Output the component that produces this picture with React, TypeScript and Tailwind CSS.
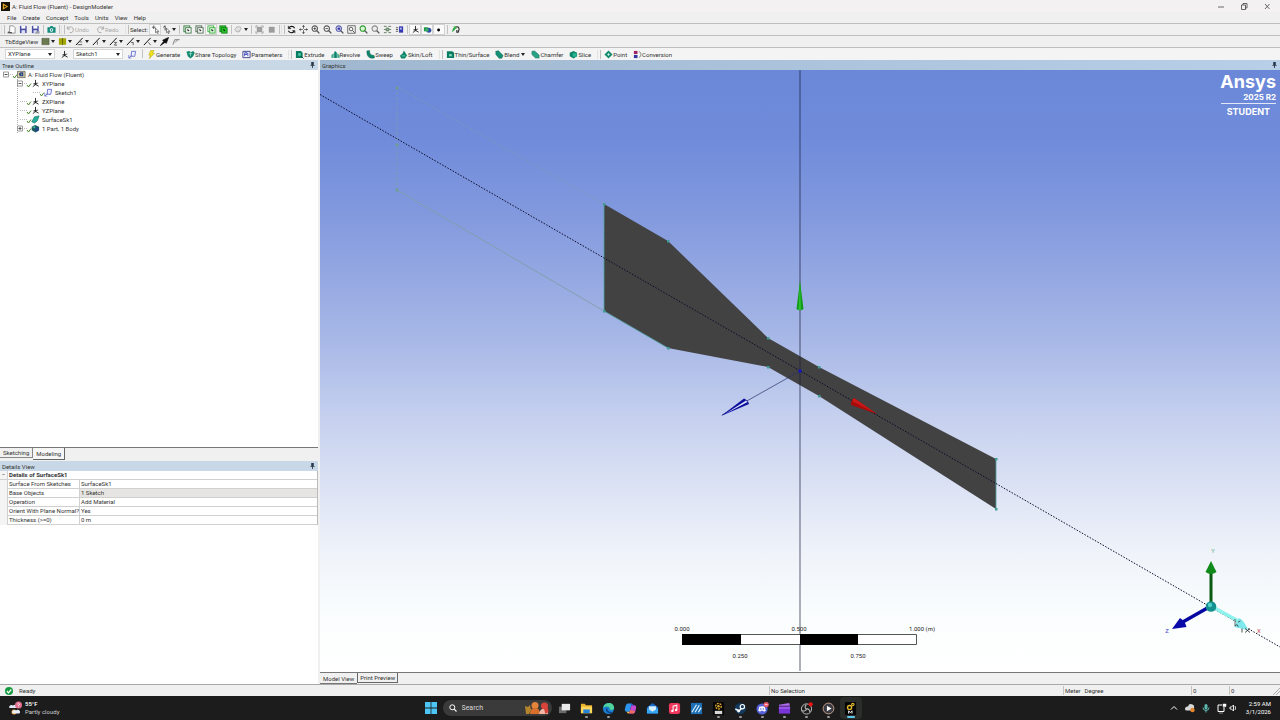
import React from "react";

type Glyph = React.ReactNode;

const axes = (
  <g fill="none" stroke="#222" strokeWidth="1">
    <path d="M5 1v5L2 8.500M5 6l3.500 2" />
    <path d="M2.500 5.500L8 4.500" stroke="#555" />
    <circle cx="5" cy="5.500" r=".8" fill="#111" />
  </g>
);

const edge = (mark: string) => (
  <g fill="none" stroke="#111">
    <path d="M1 9L8.500 1" strokeWidth="1.100" />
    <path d={mark} strokeWidth=".9" stroke="#444" />
  </g>
);

const boxGlyph = (front: string, edgeColor: string, back: string) => (
  <g>
    <rect x="1" y="1" width="6.500" height="6.500" fill={back} stroke={edgeColor} />
    <rect x="3" y="3" width="6" height="6" fill={front} stroke={edgeColor} />
    <path d="M4.500 4.500l3 1.200-1.300.6-.6 1.300z" fill="#111" />
  </g>
);

const lens = (inner: Glyph, ring = "#555", fill = "#fff") => (
  <g>
    <circle cx="4.200" cy="4" r="3" fill={fill} stroke={ring} strokeWidth="1.200" />
    <path d="M6.500 6.500L9.300 9.300" stroke="#555" strokeWidth="1.500" />
    {inner}
  </g>
);

const disk = (
  <g>
    <path d="M1 1h7.500v8H1z" fill="#4a4fa3" />
    <path d="M2.600 1h4.500v3H2.600z" fill="#fff" />
    <path d="M2.800 5.800h4v3.200h-4z" fill="#dfe2f4" />
  </g>
);

const glyphs: Record<string, Glyph> = {
  open: (
    <g>
      <path d="M3 1h4l2 2v6H3z" fill="#fff" stroke="#777" strokeWidth=".8" />
      <path d="M.5 8.500l2-2v1.200h3v1.600h-5z" fill="#555" />
    </g>
  ),
  save: disk,
  saveAs: (
    <g>
      {disk}
      <path d="M4 9.500h5.500v-2.500H6z" fill="#9a9aa8" />
    </g>
  ),
  camera: (
    <g>
      <path d="M.5 2.500h2.500L4 1.200h2.200l.8 1.300h2.500v6h-9z" fill="#138a7c" />
      <circle cx="5" cy="5.500" r="2" fill="#fff" />
      <circle cx="5" cy="5.500" r="1" fill="#138a7c" />
    </g>
  ),
  undo: <path d="M1.500 1.500v3h3M1.800 4.200A3.300 3.300 0 1 1 4 8.500" fill="none" stroke="#a5a5a5" />,
  redo: <path d="M8.500 1.500v3h-3M8.200 4.200A3.300 3.300 0 1 0 6 8.500" fill="none" stroke="#a5a5a5" />,
  pick: (
    <g>
      <path d="M1 2.500h4M3 .5v4" stroke="#333" strokeWidth=".8" />
      <path d="M5 3.500v5l1.200-1 1 2 .8-.4-.9-1.900h1.600z" fill="#fff" stroke="#222" strokeWidth=".6" />
    </g>
  ),
  pickMode: (
    <g>
      <path d="M3.500 1v5M1.500 2.500L3.500.8" stroke="#333" fill="none" />
      <path d="M5 3.500v5l1.200-1 1 2 .8-.4-.9-1.900h1.600z" fill="#fff" stroke="#222" strokeWidth=".6" />
    </g>
  ),
  boxPoint: boxGlyph("#fff", "#3c7a45", "#dcefdc"),
  boxEdge: boxGlyph("#fff", "#4d6a50", "#ececec"),
  boxFace: boxGlyph("#d6f5d4", "#3cae3f", "#fff"),
  boxBody: boxGlyph("#29cc2b", "#157f1b", "#29cc2b"),
  extend: (
    <g>
      <path d="M1 5l2-3h4l1 2-2 3H2z" fill="#e2e2e2" stroke="#a8a8a8" strokeWidth=".8" />
      <path d="M4 8.500l3-2.500" stroke="#b0b0b0" />
    </g>
  ),
  blockOut: (
    <g stroke="#8c8c8c" strokeWidth=".8">
      <path d="M2.500 2.500h5v5h-5z" fill="#a0a0a0" />
      <path d="M1 3V1h2M7 1h2v2M9 7v2H7M3 9H1V7" fill="none" />
    </g>
  ),
  block: <path d="M2 2h6.500v6.500H2z" fill="#9b9b9b" />,
  rotate: (
    <g fill="none" stroke="#111" strokeWidth="1.200">
      <path d="M8.500 3.500A3.700 3.700 0 0 0 2 3.500M1.500 6.500A3.700 3.700 0 0 0 8 6.800" />
      <path d="M1.500 1v3h3M8.700 9V6.300H6" strokeWidth=".9" />
    </g>
  ),
  pan: (
    <g fill="#222">
      <path d="M5 0l1.500 2h-3zM5 10l1.500-2h-3zM0 5l2-1.500v3zM10 5L8 3.500v3z" />
      <path d="M5 2.500v1.500M5 6v1.500M2.500 5H4M6 5h1.500" stroke="#222" strokeWidth=".9" />
    </g>
  ),
  zoomIn: lens(<path d="M4.200 2.500v3M2.700 4h3" stroke="#333" strokeWidth=".9" />),
  zoomOut: lens(<path d="M2.700 4h3" stroke="#333" strokeWidth=".9" />),
  zoomBlue: lens(<path d="M2.800 2.800h3v2.500h-3z" fill="#2b2fa8" />, "#5558a8"),
  zoomBox: (
    <g>
      <path d="M.8.800h8.400v8.400H.8z" fill="#f5f5f5" stroke="#555" strokeWidth=".9" />
      <circle cx="4.500" cy="4.500" r="2" fill="none" stroke="#444" strokeWidth=".9" />
      <path d="M6 6l2.500 2.500" stroke="#444" />
    </g>
  ),
  zoomFit: lens(null, "#2b9a2d", "#d9f7d6"),
  zoomPrev: lens(null, "#8a8a8a", "#eee"),
  iso: (
    <g stroke="#4b6a4d" strokeWidth=".9" fill="none">
      <path d="M1 1.500h3M6 1.500h3M1 8.500h3M6 8.500h3M1 5h2M7 5h2" />
      <path d="M3.500 3.500h3v3h-3z" fill="#9abf9c" />
    </g>
  ),
  look: (
    <g>
      <path d="M4.500 1.500H9v7H4.500z" fill="#3539b0" />
      <path d="M1 3h2.500M1 5h2.500M1 7h2.500" stroke="#444" strokeWidth=".9" />
      <path d="M5.500 3h2v2h-2z" fill="#b9c0ff" />
    </g>
  ),
  axes,
  bodies: (
    <g>
      <path d="M1 2.500h4.500v4.500H1z" fill="#1e9a48" />
      <circle cx="6.500" cy="5.800" r="2.800" fill="#2d4fa3" />
      <path d="M3 4h3v3H3z" fill="#3fb46a" />
    </g>
  ),
  dot: <circle cx="4" cy="5.500" r="1.600" fill="#000" />,
  display: (
    <g>
      <path d="M1 8l1.500-5L4.500 5z" fill="#1f9d36" />
      <path d="M5 2.500c2-1.500 4 0 4 2.500L8 8H6.500V5.500" fill="none" stroke="#222" strokeWidth="1.200" />
      <path d="M3 1.500h3v3H3z" fill="#3fb14d" />
    </g>
  ),
  faceColor: <path d="M1 1.500h8v7H1z" fill="#6c7a4f" stroke="#4d5840" strokeWidth=".6" />,
  edgeColor: (
    <g>
      <path d="M1 1.500h3.500v7H1zM5.500 1.500H9v7H5.500z" fill="#a3a500" />
      <path d="M5 1v8" stroke="#5e6000" />
    </g>
  ),
  edge0: edge("M3 8.500h5M5 5.500h3"),
  edge1: edge("M6 5v3.500"),
  edge2: edge("M5.500 6h3l-2.500 3h3"),
  edge3: edge("M5.500 6h2.500v3"),
  edge4: edge("M6 6l2.500 3"),
  edgeThick: <path d="M.5 9.500L4 5 3 3.500 9.500.5 7 7 5.500 6z" fill="#0c0c0c" stroke="#0c0c0c" strokeWidth=".8" />,
  edgeEnd: <path d="M1 8.500L3 3h5.500M3.500 6l3-3" fill="none" stroke="#777" />,
  sketch: (
    <g fill="none" strokeWidth=".9">
      <path d="M4 1.500h4.500L7.500 7H3.500z" stroke="#5a64c8" fill="#eef0ff" />
      <path d="M.8 9l3-3" stroke="#35409c" />
      <path d="M.8 5.500v3.500h3" stroke="#7a84d8" />
    </g>
  ),
  generate: <path d="M4 .5h4L6 3.500h2.500L2.500 9.700l1.300-4H2z" fill="#f2e21b" stroke="#a89a10" strokeWidth=".5" />,
  topology: (
    <g>
      <path d="M.5 2l3-1 2 1.500L8 1l1.700 2L8 7 5 9.500 2 7z" fill="#11886f" />
      <path d="M3 4h4M5 3v4" stroke="#a9e5d6" strokeWidth=".8" />
    </g>
  ),
  params: (
    <g>
      <path d="M1 1.500h8v7H1z" fill="#fff" stroke="#333a8c" />
      <path d="M3 7V3h2.500v2H3M6.500 3v4" fill="none" stroke="#3b44b8" />
    </g>
  ),
  extrude: (
    <g>
      <path d="M1 1h5.500l2 2v6H1z" fill="#0b7d63" />
      <path d="M3.500 3.500h3v3h-3z" fill="#48c7a2" />
      <path d="M6.500 6.500l3 3" stroke="#0a4f40" />
    </g>
  ),
  revolve: (
    <g fill="#0d8469">
      <path d="M4.500 1l2 2v6h-3V3z" />
      <path d="M.5 5.500L3 3.500v5L.5 9zM9.500 5.500L7 3.500v5l2.500.5z" fill="#3aa98c" />
    </g>
  ),
  sweep: <path d="M1 1l3-.5C3.800 4 5 6 9 6l.5 2.500C5 10.500.5 8 1 1z" fill="#0d8469" stroke="#0a5f4c" strokeWidth=".5" />,
  skin: (
    <g>
      <path d="M5.500.5L7 3 9 6 6.500 9.500h-4L1 6.500 4 4z" fill="#0d8469" />
      <path d="M3 6.500h4" stroke="#5fcfb2" />
    </g>
  ),
  thin: (
    <g>
      <path d="M1 1.500h6l2 1.500v6H1z" fill="#0b7d63" />
      <path d="M3.500 4.500h3v2.500h-3z" fill="#7fd8be" />
    </g>
  ),
  blend: <path d="M.8 1.500l3-.7L9 6 7.500 9.200H4.500L1 5z" fill="#159075" stroke="#0a5f4c" strokeWidth=".5" />,
  chamfer: <path d="M1 1.500l3-.5 5 4.500V9H5L1 5z" fill="#2aa287" stroke="#0b6b55" strokeWidth=".5" />,
  slice: (
    <g>
      <path d="M.8 3L5 1l4 2v4L5 9.500.8 7z" fill="#0d8469" />
      <path d="M4 3.500h4.500v4H4z" fill="#27b38e" />
    </g>
  ),
  point: (
    <g>
      <path d="M5 .5L9.500 5 5 9.500.5 5z" fill="#138a70" />
      <path d="M5 3.500v3M3.500 5h3" stroke="#e8fff8" strokeWidth=".8" />
    </g>
  ),
  conversion: (
    <g>
      <path d="M1 1h4v3.500H1z" fill="#a02463" />
      <path d="M1 5.500h4V9H1z" fill="#3436a0" />
      <path d="M6.500 1.500c3 1.500 3 5.500 0 7" fill="none" stroke="#777" />
    </g>
  ),
  project: (
    <g>
      <path d="M.5 1.500h8.500v7H.5z" fill="#d9d2a0" stroke="#444" strokeWidth=".7" />
      <path d="M2 4l2-1.500h3V7H3z" fill="#3a3d8e" />
      <path d="M4 3.500l2 1-1 2z" fill="#4ec06a" />
    </g>
  ),
  surface: <path d="M.8 7.500L4 2l5-1-2 5.500-3 2.500z" fill="#27ad98" stroke="#0b7466" strokeWidth=".7" />,
  part: (
    <g>
      <path d="M.8 3L4.500 1 9 3v4L5 9.500.8 7z" fill="#1c5d62" />
      <path d="M1.500 3.500L4.500 2v3z" fill="#45b59c" />
      <circle cx="6.500" cy="6" r="2.200" fill="#20498c" />
    </g>
  ),
};

function Ico({ name }: { name: string }) {
  return (
    <svg viewBox="0 0 10 10" className="size-[9px] shrink-0" aria-hidden="true">
      {glyphs[name]}
    </svg>
  );
}

function Caret() {
  return (
    <svg viewBox="0 0 4 3" className="h-[3px] w-1 shrink-0" aria-hidden="true">
      <path d="M0 0h4L2 3z" fill="#222" />
    </svg>
  );
}

function Sep() {
  return <span className="flex h-[9px] w-1 shrink-0 justify-center before:w-px before:bg-[#c2c2c2]" />;
}

function Grip() {
  return <span className="h-[9px] w-1 shrink-0 border-x border-[#bdbdbd] border-l-[#e2e2e2]" />;
}

function Tool({ name, label, menu, pressed }: { name: string; label: string; menu?: boolean; pressed?: boolean }) {
  const size = menu ? "w-4 justify-start pl-px" : "w-3 justify-center";
  const face = pressed ? "bg-[#fafafa] ring-1 ring-inset ring-[#d4d4d4]" : "";
  return (
    <button type="button" aria-label={label} className={`flex h-[11px] shrink-0 items-center gap-px ${size} ${face}`}>
      <Ico name={name} />
      {menu && <Caret />}
    </button>
  );
}

function Feature({ name, label, menu, dim }: { name: string; label: string; menu?: boolean; dim?: boolean }) {
  return (
    <button type="button" className={`flex shrink-0 items-center ${dim ? "text-[#a8a8a8]" : ""}`}>
      <Ico name={name} />
      <span className={menu ? "pr-[2px]" : ""}>{label}</span>
      {menu && <Caret />}
    </button>
  );
}

function FeatureGroup({ children }: { children: React.ReactNode }) {
  return <div className="flex items-center gap-[6px] pl-[3px] pr-[6px]">{children}</div>;
}

function Combo({ label, value }: { label: string; value: string }) {
  return (
    <span className="flex h-[10px] w-[50px] shrink-0 items-center border border-[#d5d5d5] bg-white pr-[2px]">
      <select aria-label={label} className="min-w-0 flex-1 appearance-none bg-transparent pl-[2px] leading-[8px] outline-none">
        <option>{value}</option>
      </select>
      <Caret />
    </span>
  );
}

function Pin() {
  return (
    <svg viewBox="0 0 5 7" className="h-[6px] w-[5px]" aria-hidden="true">
      <path d="M1 0h3v3.500h1v1H3V7H2V4.500H0v-1h1z" fill="#29394a" />
    </svg>
  );
}

const bar = "flex shrink-0 items-center border-t border-[#bfbfbf]";

const menus = ["File", "Create", "Concept", "Tools", "Units", "View", "Help"];
const edgeTools = ["edge0", "edge1", "edge2", "edge3", "edge4"];

const views: [string, string][] = [
  ["rotate", "Rotate"],
  ["pan", "Pan"],
  ["zoomIn", "Zoom in"],
  ["zoomOut", "Zoom out"],
  ["zoomBlue", "Box zoom"],
  ["zoomBox", "Zoom to box"],
  ["zoomFit", "Zoom to fit"],
  ["zoomPrev", "Previous view"],
  ["iso", "Isometric view"],
  ["look", "Look at face"],
];

function TreeRow({ icon, label, open, pad }: { icon: string; label: string; open?: boolean; pad?: string }) {
  return (
    <div className={`flex h-[9px] items-center ${pad ?? ""}`}>
      <svg viewBox="0 0 17 9" className="h-[9px] w-[17px] shrink-0" aria-hidden="true">
        <path d="M3 4.500h8" stroke="#bbb" strokeDasharray="1 1" />
        {open !== undefined && (
          <g fill="#fff" stroke="#999">
            <path d="M.5 2h5v5h-5z" />
            <path d={open ? "M1.500 4.500h3" : "M1.500 4.500h3M3 3v3"} stroke="#555" />
          </g>
        )}
        <path d="M10 6l1.500 2L14 4.500" fill="none" stroke="#4b8a2c" />
      </svg>
      <span className="-ml-[3px] mr-[2px] flex">
        <Ico name={icon} />
      </span>
      {label}
    </div>
  );
}

const details: [string, string][] = [
  ["Surface From Sketches", "SurfaceSk1"],
  ["Base Objects", "1 Sketch"],
  ["Operation", "Add Material"],
  ["Orient With Plane Normal?", "Yes"],
  ["Thickness (>=0)", "0 m"],
];

const outline = "284,134 348,171 448,268 499,297 676,389 676,439 499,326 448,297 348,278 284,241";
const corners = outline.split(" ").map((p) => p.split(",").map(Number));

function Scene() {
  return (
    <svg viewBox="0 0 960 602" className="block h-full w-full" role="img" aria-label="Nozzle surface model">
      <g stroke="#7f9fa8" fill="none">
        <path d="M77 17L284 134" strokeDasharray="2 2" opacity=".7" />
        <path d="M77 17v103" strokeDasharray="3 2" opacity=".7" />
        <path d="M77 120L284 241" opacity=".9" />
      </g>
      <g fill="#6d9f8f">
        <circle cx="77" cy="18" r="1.500" />
        <circle cx="77" cy="75" r="1.500" />
        <circle cx="77" cy="120" r="1.500" />
      </g>
      <polygon points={outline} fill="#424242" />
      <path d="M284 134v107l64 37M676 389v50" fill="none" stroke="#4fa3a0" strokeWidth=".8" />
      {corners.map(([x, y]) => (
        <rect key={`${x}-${y}`} x={x - 1} y={y - 1} width="2.500" height="2.500" fill="#3f9d96" />
      ))}
      <path d="M0 24.500L960 577" stroke="#0a0a28" strokeWidth="1" strokeDasharray="1.500 1.500" />
      <path d="M480 0v601" stroke="#1c2140" strokeOpacity=".55" strokeWidth="1.300" />
      <path d="M480 301L402 345" stroke="#2a3068" strokeWidth=".7" />
      <path d="M480 211l-3.500 28q3.500 2.500 7 0z" fill="#0f9a17" />
      <path d="M480 211l-1.500 29h2.500z" fill="#2fbf30" />
      <path d="M557 344l-26-9q-.5-4 3-7z" fill="#a80b0b" />
      <path d="M557 344l-25-13 2-3z" fill="#cc1818" />
      <path d="M401 346l23-17.500q4 1.500 5 5.500z" fill="#0b0f9c" />
      <path d="M405 344l21-13.500 1.500 1.500z" fill="#d9defa" />
      <rect x="478.500" y="299.500" width="3" height="3" fill="#1414c8" />

      <g>
        <path d="M891 536v-35" stroke="#0a5a12" strokeWidth="3" />
        <path d="M891 491l-5.500 11q5.500 4 11 0z" fill="#118a1c" />
        <path d="M891 536l-30 17" stroke="#0508a0" strokeWidth="3.500" />
        <path d="M852 559l8-11q5 3 6.500 9z" fill="#0a0aa8" />
        <path d="M891 536l29 16" stroke="#8df3ec" strokeWidth="3.500" />
        <path d="M928 560l-14-3 5-9q5 2 9 12z" fill="#7fe9ee" />
        <circle cx="891" cy="536.500" r="5.300" fill="#168f8f" />
        <circle cx="890" cy="535" r="2.200" fill="#4fd0c8" />
        <path d="M915 549v7l2-1.500 1.300 2.500M918 552l2.500-1" fill="none" stroke="#444" strokeWidth=".8" />
        <path d="M922 558.500v4M925 558.500l5 4M930 558.500l-5 4" stroke="#222" strokeWidth=".8" />
      </g>
      <g className="text-[6px]" textAnchor="middle">
        <text x="893" y="483" fill="#6fae8f">Y</text>
        <text x="847" y="563" fill="#4a4fd0">Z</text>
        <text x="939" y="563" fill="#d04a5a">X</text>
      </g>

      <path d="M362.500 564.500h234v10h-234z" fill="#fff" stroke="#555" />
      <path d="M362 564h59v11h-59zM480 564h58v11h-58z" fill="#000" />
      <g className="text-[6px]" textAnchor="middle" fill="#222">
        <text x="362" y="561">0.000</text>
        <text x="479" y="561">0.500</text>
        <text x="602" y="561">1.000 (m)</text>
        <text x="420" y="588">0.250</text>
        <text x="538" y="588">0.750</text>
      </g>
    </svg>
  );
}

const apps: { label: string; running?: boolean; active?: boolean; art: Glyph }[] = [
  {
    label: "Task view",
    art: (
      <g>
        <path d="M1 5h8v7H1z" fill="#6a6a6a" />
        <path d="M4 2h9v7H4z" fill="#e9e9e9" />
      </g>
    ),
  },
  {
    label: "File Explorer",
    running: true,
    art: (
      <g>
        <path d="M1 2h4l1.500 1.500H13V12H1z" fill="#e9b32b" />
        <path d="M1 5h12v7H1z" fill="#ffd65c" />
        <path d="M3.500 8h7v4h-7z" fill="#2583d8" />
      </g>
    ),
  },
  {
    label: "Edge",
    running: true,
    art: (
      <g>
        <circle cx="7" cy="7" r="6" fill="#1b7fd0" />
        <path d="M1.200 6C2 2.500 5 1 7.500 1c4 0 5.800 3 5.500 5.500-.4 2.500-3.500 2.600-4.800 1.700C9 6 7 4.500 5 4.800 3 5 1.800 5.500 1.200 6z" fill="#4fd39a" />
        <path d="M5 7c-.5 3 2 5 5.500 4.500" fill="none" stroke="#0b3f86" strokeWidth="1.500" />
      </g>
    ),
  },
  {
    label: "Copilot",
    art: (
      <g>
        <path d="M4 1.500h4.500L6 10.500H3C.8 10.500.6 8.500 1.200 6.500 1.800 4 2.300 1.500 4 1.500z" fill="#2b95ee" />
        <path d="M10 12.500H5.500L8 3.500h3c2.200 0 2.400 2 1.800 4-.6 2.500-1.100 5-2.800 5z" fill="#c24bd0" />
        <path d="M3 10.500h3l-.8 2q-1.800 0-2.200-2z" fill="#f7c04a" />
        <path d="M8 1.500q2 0 2.500 2H8z" fill="#2a55d8" />
        <path d="M6.600 8.500L5.500 12.500H10q1.200-.3 1.800-2.500z" fill="#ee6a5a" />
      </g>
    ),
  },
  {
    label: "Mail",
    art: (
      <g>
        <path d="M1 6l6-5 6 5v6.500H1z" fill="#1769c9" />
        <path d="M3 4.500h8V9L7 11 3 9z" fill="#d6efff" />
        <path d="M1 6.500l6 4 6-4v6H1z" fill="#38a5f2" />
      </g>
    ),
  },
  {
    label: "Music",
    art: (
      <g>
        <rect x="1" y="1" width="12" height="12" rx="2.500" fill="#f0385c" />
        <path d="M5.500 9.500V4.500l4-1v5" fill="none" stroke="#fff" strokeWidth="1.100" />
        <circle cx="4.700" cy="9.600" r="1.300" fill="#fff" />
        <circle cx="8.700" cy="8.700" r="1.300" fill="#fff" />
      </g>
    ),
  },
  {
    label: "MATLAB",
    art: (
      <g>
        <path d="M1 1h12v12H1z" fill="#1c6fb4" />
        <path d="M2 11L7 3M5.500 11L10 3.500M9 11l3-5" fill="none" stroke="#d8efff" strokeWidth="1.300" />
      </g>
    ),
  },
  {
    label: "Workbench",
    running: true,
    art: (
      <g>
        <path d="M1 0h12v14H1z" fill="#060606" />
        <circle cx="7" cy="4.500" r="3" fill="none" stroke="#dfa92a" strokeWidth="1.500" strokeDasharray="2 1" />
        <circle cx="7" cy="4.500" r="1.300" fill="#dfa92a" />
        <path d="M3 9.500h8V13H3z" fill="#d7d7d7" />
      </g>
    ),
  },
  {
    label: "Steam",
    running: true,
    art: (
      <g>
        <circle cx="7" cy="7" r="6" fill="#12395c" />
        <circle cx="9" cy="5" r="2.300" fill="none" stroke="#fff" strokeWidth="1.300" />
        <path d="M1.500 7.500l4 2L8 7" fill="none" stroke="#fff" strokeWidth="1.600" />
        <circle cx="5" cy="9.800" r="1.600" fill="#fff" />
      </g>
    ),
  },
  {
    label: "Discord",
    running: true,
    art: (
      <g>
        <circle cx="6.500" cy="7.500" r="6" fill="#5561d8" />
        <path d="M3.500 5.200q3-1.200 6 0l1 4.300-2 1-.6-1H5.100l-.6 1-2-1z" fill="#fff" />
        <circle cx="5.200" cy="7.500" r=".8" fill="#5561d8" />
        <circle cx="7.800" cy="7.500" r=".8" fill="#5561d8" />
        <circle cx="11" cy="2.800" r="2.800" fill="#ea5a6a" />
        <path d="M9.500 2.800h3" stroke="#ffd8dc" />
      </g>
    ),
  },
  {
    label: "Clipchamp",
    running: true,
    art: (
      <g>
        <path d="M1 3l11-2 .8 3H1z" fill="#b26bf0" />
        <path d="M1 5h12v7.500H1z" fill="#7a35d8" />
        <path d="M1 5h12v2.500H1z" fill="#9a55ea" />
      </g>
    ),
  },
  {
    label: "OBS Studio",
    running: true,
    art: (
      <g>
        <circle cx="7" cy="7.500" r="5.500" fill="#1e1e1e" stroke="#c4c4c4" />
        <path d="M7 7.500c-2-1-2-3.500 0-4.500M7 7.500c2-.5 4 1 3.500 3.500M7 7.500c-.5 2-3 3-4.500 1.500" fill="none" stroke="#c4c4c4" strokeWidth="1.100" />
        <circle cx="11.500" cy="2.500" r="2.300" fill="#e81414" />
      </g>
    ),
  },
  {
    label: "Media Player",
    running: true,
    art: (
      <g>
        <circle cx="7" cy="7" r="5.800" fill="#3b3b46" stroke="#c9a48c" />
        <path d="M5.300 4l5 3-5 3z" fill="#fff" />
      </g>
    ),
  },
  {
    label: "DesignModeler",
    running: true,
    active: true,
    art: (
      <g>
        <path d="M1 0h12v14H1z" fill="#060606" />
        <circle cx="6" cy="6" r="2.200" fill="none" stroke="#e2b92e" strokeWidth="1.500" />
        <circle cx="9.500" cy="2.800" r="1.300" fill="none" stroke="#e2b92e" strokeWidth="1.200" />
        <path d="M5 12.500V9.500l1.800 2 1.800-2v3" fill="none" stroke="#fff" />
      </g>
    ),
  },
];

function Taskbar() {
  return (
    <footer className="grid h-6 shrink-0 grid-cols-[1fr_auto_1fr] items-center bg-[#1c1c1c] text-[7px] text-white">
      <button type="button" className="flex items-center gap-[3px] pl-2 text-left text-[6px] leading-[8px]">
        <svg viewBox="0 0 14 14" className="size-[14px]" aria-hidden="true">
          <path d="M1 6.500a2.500 2.500 0 0 1 4-2 3 3 0 0 1 5 2.500H2z" fill="#dfe6f5" />
          <circle cx="6" cy="11" r="2.500" fill="#f0a03c" />
          <path d="M4 11.500a2.500 2.500 0 0 1 4-2 2.300 2.300 0 0 1 4 2q0 1-1 1H5z" fill="#e8edf8" />
          <circle cx="10.500" cy="4" r="3.500" fill="#e0708f" />
          <path d="M9.500 3q1-1.500 2 0 0 1-1 1.300v.7M10.500 5.700v.6" fill="none" stroke="#fff" strokeWidth=".8" />
        </svg>
        <span>
          <span className="block font-semibold">55°F</span>
          <span className="block text-[#cfcfcf]">Partly cloudy</span>
        </span>
      </button>

      <div className="flex items-center pl-[6px]">
        <button type="button" aria-label="Start" className="mr-[6px] flex w-3">
          <svg viewBox="0 0 12 12" className="size-3" aria-hidden="true">
            <path d="M0 0h5.600v5.600H0zM6.400 0H12v5.600H6.400zM0 6.400h5.600V12H0zM6.400 6.400H12V12H6.400z" fill="#4cc4f4" />
          </svg>
        </button>
        <label className="mr-[2px] flex h-4 w-[109px] items-center rounded-full bg-[#3a3a3a] pl-[6px] pr-[2px]">
          <svg viewBox="0 0 8 8" className="size-2 shrink-0" aria-hidden="true">
            <circle cx="3.300" cy="3.300" r="2.500" fill="none" stroke="#fff" strokeWidth="1" />
            <path d="M5.200 5.200L7.500 7.500" stroke="#fff" strokeWidth="1.100" />
          </svg>
          <input aria-label="Search" placeholder="Search" className="min-w-0 flex-1 bg-transparent pl-[5px] outline-none placeholder:text-[#d8d8d8]" />
          <svg viewBox="0 0 26 14" className="h-[14px] w-[26px] shrink-0" aria-hidden="true">
            <path d="M1 5l3 1 2-2 1 5-2 4H2z" fill="#b5852c" />
            <circle cx="11" cy="4.500" r="3.500" fill="#e2853a" />
            <path d="M6 13q0-6 5-6t5 6z" fill="#d8702c" />
            <circle cx="20.500" cy="5" r="3.500" fill="#d8433a" />
            <path d="M15 13q1-5 4-5 5 0 5 5z" fill="#f1b8a8" />
            <path d="M20 8l4-1 .5 4-3 2z" fill="#d8433a" />
          </svg>
        </label>
        <div className="flex">
          {apps.map((app) => (
            <button
              key={app.label}
              type="button"
              aria-label={app.label}
              className={`flex h-[22px] w-[22px] flex-col items-center justify-end gap-px rounded-sm pb-px ${app.active ? "bg-[#2a2d2a]" : ""}`}
            >
              <svg viewBox="0 0 14 14" className="size-[13px]" aria-hidden="true">
                {app.art}
              </svg>
              <span className={`h-[2px] rounded-full ${app.active ? "w-2 bg-[#5cc8ee]" : app.running ? "w-[3px] bg-[#9a9a9a]" : "w-[3px]"}`} />
            </button>
          ))}
        </div>
      </div>

      <div className="flex items-center justify-end gap-[9px] pr-[9px]">
        <svg viewBox="0 0 68 12" className="h-3 w-[68px]" role="img" aria-label="System tray">
          <path d="M2 7.500L5 4.500l3 3" fill="none" stroke="#fff" />
          <path d="M16 7a2.500 2.500 0 0 1 3-2.500A3 3 0 0 1 25 6q0 2.500-2 2.500h-5.500Q16 8.500 16 7z" fill="#d8d8d8" />
          <circle cx="23.500" cy="8" r="2.200" fill="#e8862c" />
          <rect x="35.500" y="2" width="3" height="5.500" rx="1.500" fill="#5fb8b0" />
          <path d="M34 5.500a3 3 0 0 0 6 0M37 8.500v2" fill="none" stroke="#5fb8b0" />
          <path d="M55 5V9.500h-6V3h4" fill="none" stroke="#fff" />
          <path d="M54 2h3v2.500h-3zM50 11h4" fill="#fff" stroke="#fff" strokeWidth=".5" />
          <path d="M61 5h1.500l2-2v6l-2-2H61z" fill="none" stroke="#fff" strokeWidth=".9" />
          <path d="M66 4q1.200 2 0 4" fill="none" stroke="#fff" strokeWidth=".8" />
        </svg>
        <div className="text-right text-[6px] leading-[8px]">
          <div>2:59 AM</div>
          <div>3/1/2026</div>
        </div>
      </div>
    </footer>
  );
}

export default function App() {
  return (
    <div className="flex h-screen flex-col overflow-hidden bg-[#f0f0f0] font-['Roboto','Noto_Sans',sans-serif] text-[6px] leading-[9px] whitespace-nowrap text-[#333]">
      <header className="flex h-3 shrink-0 items-center gap-[2px] bg-[#f3f1f1] pl-px">
        <svg viewBox="0 0 10 10" className="size-[9px]" aria-hidden="true">
          <path d="M0 0h10v10H0z" fill="#161208" />
          <path d="M2 1.500L8 5 2 8.500z" fill="#e5a823" />
          <path d="M3.500 4L6 5 3.500 6.500z" fill="#161208" />
        </svg>
        <h1 className="flex-1">A: Fluid Flow (Fluent) - DesignModeler</h1>
        <div className="flex gap-[14px] pr-2">
          {[
            ["Minimize", "M1 5h6"],
            ["Restore", "M1.500 3h4v4.500h-4zM3 3V1.500h4V6H5.500"],
            ["Close", "M2 2l4.500 5M6.500 2L2 7"],
          ].map(([label, d]) => (
            <button key={label} type="button" aria-label={label} className="w-[9px]">
              <svg viewBox="0 0 9 9" className="size-[9px]" aria-hidden="true">
                <path d={d} fill="none" stroke="#444" strokeWidth=".8" />
              </svg>
            </button>
          ))}
        </div>
      </header>

      <nav className="flex h-[11px] shrink-0 items-center gap-[6px] pl-[7px]">
        {menus.map((m) => (
          <button key={m} type="button">
            {m}
          </button>
        ))}
      </nav>

      <div className={`${bar} h-3 pl-px`}>
        <Grip />
        <Tool name="open" label="New" />
        <Tool name="save" label="Save" />
        <Tool name="saveAs" label="Save as" />
        <Sep />
        <Tool name="camera" label="Image capture" />
        <Sep />
        <Grip />
        <div className="flex w-[60px] gap-[7px] pl-px">
          <Feature name="undo" label="Undo" dim />
          <Feature name="redo" label="Redo" dim />
        </div>
        <Grip />
        <span className="w-5 pl-px">Select:</span>
        <Tool name="pick" label="New selection" pressed />
        <Tool name="pickMode" label="Selection mode" menu />
        <Sep />
        <Tool name="boxPoint" label="Select points" />
        <Tool name="boxEdge" label="Select edges" />
        <Tool name="boxFace" label="Select faces" pressed />
        <Tool name="boxBody" label="Select bodies" />
        <Sep />
        <Tool name="extend" label="Extend selection" menu />
        <Sep />
        <Tool name="blockOut" label="Expand selection" />
        <Tool name="block" label="Shrink selection" />
        <Sep />
        <Grip />
        {views.map(([name, label]) => (
          <Tool key={name} name={name} label={label} />
        ))}
        <Sep />
        <Tool name="axes" label="Display plane" pressed />
        <Tool name="bodies" label="Display model" pressed />
        <Tool name="dot" label="Display points" pressed />
        <Sep />
        <Tool name="display" label="Show vertices" />
      </div>

      <div className={`${bar} h-3 pl-[5px]`}>
        <span className="w-[35px]">TbEdgeView</span>
        <div className="flex gap-px">
          <Tool name="faceColor" label="Face colouring" menu />
          <Tool name="edgeColor" label="Edge colouring" menu />
          {edgeTools.map((name) => (
            <Tool key={name} name={name} label={`Edge style ${name.slice(4)}`} menu />
          ))}
        </div>
        <Tool name="edgeThick" label="Thick edges" />
        <Tool name="edgeEnd" label="Edge ends" />
      </div>

      <div className={`${bar} h-[13px] bg-[#f4f4f4] pl-[5px]`}>
        <Combo label="Active plane" value="XYPlane" />
        <div className="flex px-[3px]">
          <Tool name="axes" label="New plane" />
        </div>
        <Combo label="Active sketch" value="Sketch1" />
        <div className="flex gap-[2px] pl-[3px]">
          <Tool name="sketch" label="New sketch" />
          <Sep />
        </div>
        <FeatureGroup>
          <Feature name="generate" label="Generate" />
          <Feature name="topology" label="Share Topology" />
          <Feature name="params" label="Parameters" />
        </FeatureGroup>
        <Grip />
        <FeatureGroup>
          <Feature name="extrude" label="Extrude" />
          <Feature name="revolve" label="Revolve" />
          <Feature name="sweep" label="Sweep" />
          <Feature name="skin" label="Skin/Loft" />
        </FeatureGroup>
        <Grip />
        <FeatureGroup>
          <Feature name="thin" label="Thin/Surface" />
          <Feature name="blend" label="Blend" menu />
          <Feature name="chamfer" label="Chamfer" />
          <Feature name="slice" label="Slice" />
        </FeatureGroup>
        <Grip />
        <FeatureGroup>
          <Feature name="point" label="Point" />
          <Feature name="conversion" label="Conversion" />
        </FeatureGroup>
      </div>

      <main className="flex min-h-0 flex-1">
        <aside className="mr-[2px] flex w-[318px] shrink-0 flex-col bg-white">
          <h2 className="flex h-[10px] shrink-0 items-center justify-between bg-[#c9d8e6] pl-[2px] pr-[3px]">
            Tree Outline <Pin />
          </h2>
          <div className="flex-1 pl-[3px]">
            <TreeRow icon="project" label="A: Fluid Flow (Fluent)" open />
            <div className="ml-[14px] border-l border-dotted border-[#aaa]">
              <div className="-ml-px">
                <TreeRow icon="axes" label="XYPlane" open />
                <TreeRow icon="sketch" label="Sketch1" pad="pl-[13px]" />
                <TreeRow icon="axes" label="ZXPlane" />
                <TreeRow icon="axes" label="YZPlane" />
                <TreeRow icon="surface" label="SurfaceSk1" />
                <TreeRow icon="part" label="1 Part, 1 Body" open={false} />
              </div>
            </div>
          </div>
          <div className="flex h-[14px] shrink-0 border-t border-[#777] bg-[#f0f0f0]" role="tablist">
            <button type="button" role="tab" aria-selected="false" className="h-[10px] border-b border-r border-[#888] px-[3px]">
              Sketching
            </button>
            <button type="button" role="tab" aria-selected="true" className="h-[12px] border-b border-r border-[#666] bg-[#f6f6f6] px-[3px]">
              Modeling
            </button>
          </div>
          <h2 className="flex h-[10px] shrink-0 items-center justify-between bg-[#c9d8e6] pl-[2px] pr-[3px]">
            Details View <Pin />
          </h2>
          <div className="h-[213px] shrink-0">
            <table className="w-full table-fixed border-separate border-spacing-0 border-r border-[#bbb] leading-[8px]">
              <colgroup>
                <col className="w-[7px]" />
                <col className="w-[72px]" />
                <col />
              </colgroup>
              <thead>
                <tr>
                  <th className="h-[9px] border-b border-[#d0d0d0] bg-[#f4f4f4] p-0 text-center font-normal">−</th>
                  <th colSpan={2} className="h-[9px] border-b border-l border-[#d0d0d0] p-0 pl-px text-left font-bold">
                    Details of SurfaceSk1
                  </th>
                </tr>
              </thead>
              <tbody>
                {details.map(([key, value], i) => (
                  <tr key={key}>
                    <td className="h-[9px] bg-[#f4f4f4] p-0" />
                    <th scope="row" className="h-[9px] border-b border-l border-[#d0d0d0] p-0 pl-px text-left font-normal">
                      {key}
                    </th>
                    <td className={`h-[9px] border-b border-l border-[#d0d0d0] p-0 pl-px ${i === 1 ? "bg-[#e6e5e1]" : ""}`}>{value}</td>
                  </tr>
                ))}
              </tbody>
            </table>
          </div>
        </aside>

        <section className="flex min-w-0 flex-1 flex-col">
          <h2 className="flex h-[10px] shrink-0 items-center justify-between bg-linear-to-r from-[#9fb8d0] to-[#b7d0e8] pl-[2px] pr-[3px]">
            Graphics <Pin />
          </h2>
          <div className="relative min-h-0 flex-1 bg-[linear-gradient(to_bottom,#6b87d8_0%,#6f8bda_11%,#8299de_24%,#a6b6e6_44%,#c6d1ef_58%,#dfe5f5_71%,#f0f4fa_81%,#fbfefe_91%,#ffffff_100%)]">
            <Scene />
            <div className="absolute right-1 top-[2px] flex flex-col items-end font-['Inter',sans-serif] font-bold text-white">
              <span className="text-[18px] leading-5">Ansys</span>
              <span className="text-[8px] leading-[10px]">2025 R2</span>
              <span className="mt-px border-t border-white/80 px-[6px] pt-[3px] text-[9px] leading-[10px]">STUDENT</span>
            </div>
          </div>
          <div className="flex h-3 shrink-0 border-t border-[#777] bg-[#f0f0f0]" role="tablist">
            <button type="button" role="tab" aria-selected="true" className="h-[11px] border-b border-[#777] px-[3px]">
              Model View
            </button>
            <button type="button" role="tab" aria-selected="false" className="h-[10px] border border-t-0 border-[#666] px-[2px]">
              Print Preview
            </button>
          </div>
        </section>
      </main>

      <div className="flex h-3 shrink-0 items-center border-t border-[#a8a8a8] bg-[#f0f0f0]">
        <div className="flex flex-1 items-center gap-[6px] pl-[5px]">
          <svg viewBox="0 0 8 8" className="size-2" aria-hidden="true">
            <circle cx="4" cy="4" r="4" fill="#179a3f" />
            <path d="M2 4l1.500 1.800L6.300 2.500" fill="none" stroke="#fff" strokeWidth="1.200" />
          </svg>
          Ready
        </div>
        <div className="w-[294px] border-l border-[#c4c4c4] pl-px">No Selection</div>
        <div className="flex w-32 gap-1 border-l border-[#c4c4c4] pl-px">
          <span>Meter</span>
          <span>Degree</span>
        </div>
        <div className="w-[38px] border-l border-[#c4c4c4] pl-px">0</div>
        <div className="w-[43px] border-l border-[#c4c4c4] pl-px">0</div>
        <svg viewBox="0 0 8 8" className="size-2" aria-hidden="true">
          <path d="M1 8l7-7M4 8l4-4" stroke="#999" strokeWidth=".8" />
        </svg>
      </div>

      <Taskbar />
    </div>
  );
}
